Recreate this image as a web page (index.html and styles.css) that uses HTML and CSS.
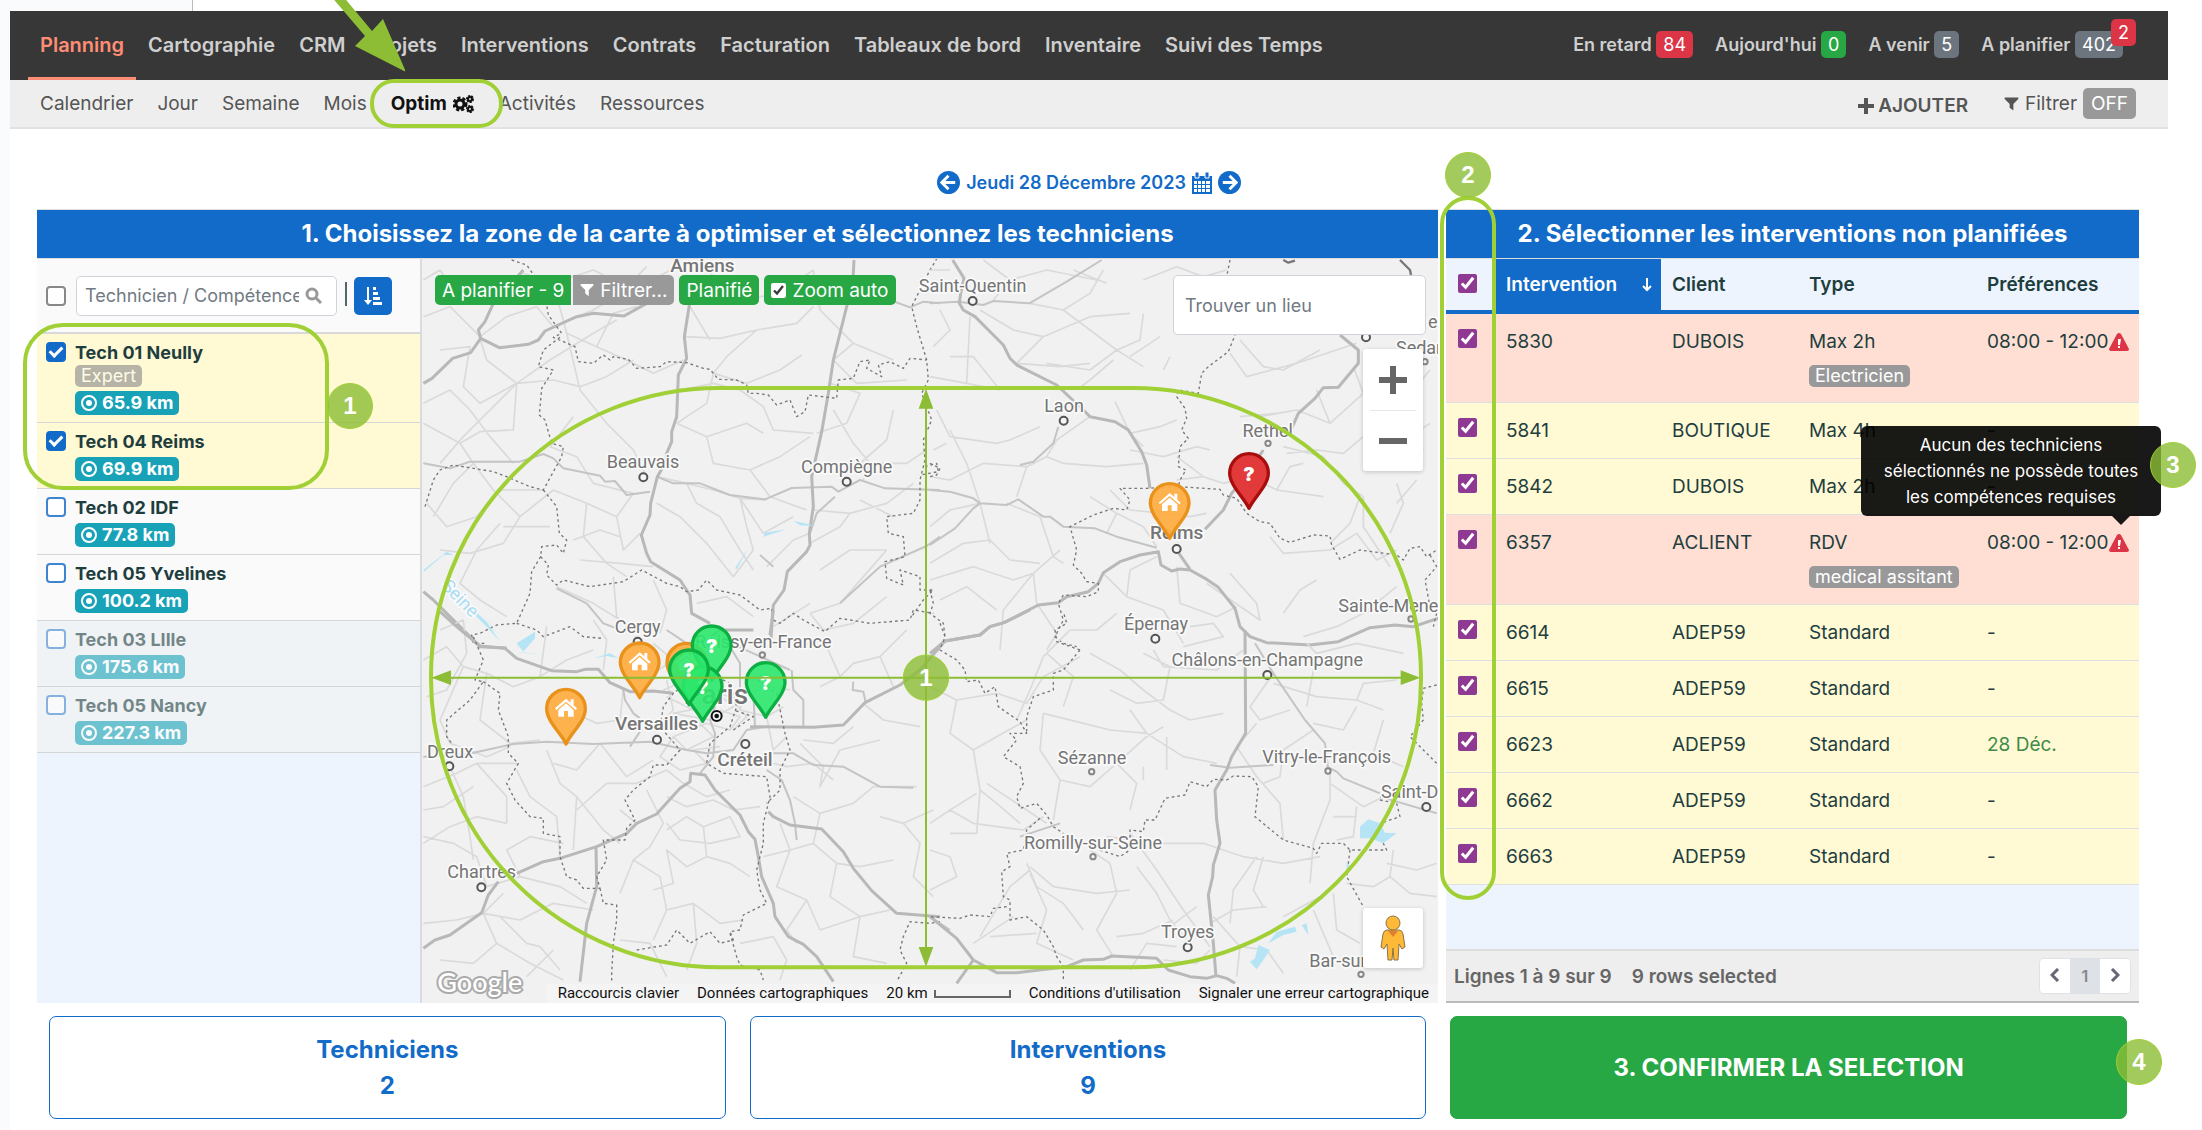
FILE: index.html
```html
<!DOCTYPE html>
<html lang="fr">
<head>
  <meta charset="UTF-8">
  <meta name="viewport" content="width=device-width, initial-scale=1.0">
  <title>Planning - Optim</title>
  <link rel="stylesheet" href="styles.css">
</head>
<body>
  <svg class="defs" width="0" height="0" aria-hidden="true">
    <symbol id="filter" viewBox="0 0 16 16"><path d="M1 1h14q1 1 0 2L10 8v7l-4-3V8L1 3Q0 2 1 1z"/></symbol>
    <symbol id="target" viewBox="0 0 16 16"><circle cx="8" cy="8" r="7" fill="none" stroke="currentColor" stroke-width="2"/><circle cx="8" cy="8" r="3"/></symbol>
    <symbol id="warning" viewBox="0 0 20 18"><path d="M10 0q1 0 2 1l8 15q0 2-2 2H2q-2 0-2-2L8 1q1-1 2-1z"/><path d="M9 6h3l-1 6H9zM9 13h2v2H9z" fill="#fff"/></symbol>
    <symbol id="house" viewBox="0 0 66 56" overflow="visible"><path d="M33 0 0 29l4 5L33 9l29 25 4-5-10-9V2h-9v10z"/><path d="M10 34 33 14l23 20v20H39V37H27v17H10z"/></symbol>
  </svg>

  <div class="page-top"></div>
  <div class="app">
    <header class="topbar">
      <nav class="main-nav">
        <a class="active" href="#">Planning</a>
        <a href="#">Cartographie</a>
        <a href="#">CRM</a>
        <a href="#">Projets</a>
        <a href="#">Interventions</a>
        <a href="#">Contrats</a>
        <a href="#">Facturation</a>
        <a href="#">Tableaux de bord</a>
        <a href="#">Inventaire</a>
        <a href="#">Suivi des Temps</a>
      </nav>
      <div class="counters">
        <a href="#">En retard <span class="count red">84</span></a>
        <a href="#">Aujourd'hui <span class="count green">0</span></a>
        <a href="#">A venir <span class="count">5</span></a>
        <a href="#">A planifier <span class="count">402<span class="count red alert">2</span></span></a>
      </div>
    </header>

    <div class="subbar">
      <nav class="sub-nav">
        <a href="#">Calendrier</a>
        <a href="#">Jour</a>
        <a href="#">Semaine</a>
        <a href="#">Mois</a>
        <a class="current" href="#">Optim
          <svg width="22" height="20" viewBox="0 0 22 20"><circle cx="7" cy="10" r="4" fill="none" stroke="#111" stroke-width="3"/><circle cx="7" cy="10" r="6" fill="none" stroke="#111" stroke-width="3" stroke-dasharray="3 2"/><g fill="none" stroke="#111"><circle cx="17" cy="5" r="2" stroke-width="2"/><circle cx="17" cy="5" r="3" stroke-width="2" stroke-dasharray="2 1"/><circle cx="17" cy="15" r="2" stroke-width="2"/><circle cx="17" cy="15" r="3" stroke-width="2" stroke-dasharray="2 1"/></g></svg>
          <svg class="arrow" width="80" height="76" viewBox="0 0 80 76"><path d="M5-3h12l30 36 11-12 23 53-51-26 10-10z"/></svg>
        </a>
        <a href="#">Activités</a>
        <a href="#">Ressources</a>
      </nav>
      <div class="actions">
        <button class="add"><svg width="16" height="16" viewBox="0 0 16 16"><path d="M6 0h4v6h6v4h-6v6H6v-6H0V6h6z"/></svg>AJOUTER</button>
        <button class="filter"><svg width="15" height="16"><use href="#filter"/></svg>Filtrer <span class="off">OFF</span></button>
      </div>
    </div>

    <div class="date">
      <button aria-label="Jour précédent"><svg width="23" height="23" viewBox="0 0 24 24"><circle cx="12" cy="12" r="12"/><path d="M12 5l-7 7 7 7M6 12h13" fill="none" stroke="#fff" stroke-width="3"/></svg></button>
      <span>Jeudi 28 Décembre 2023</span>
      <button aria-label="Calendrier"><svg width="20" height="22" viewBox="0 0 20 22"><path d="M0 4h20v18H0z"/><path d="M2 9h3v3H2zM6 9h3v3H6zM10 9h3v3h-3zM14 9h4v3h-4zM2 13h3v3H2zM6 13h3v3H6zM10 13h3v3h-3zM14 13h4v3h-4zM2 17h3v3H2zM6 17h3v3H6zM10 17h3v3h-3zM14 17h4v3h-4z" fill="#fff"/><path d="M3 0h4v6H3zM13 0h4v6h-4z" stroke="#fff"/></svg></button>
      <button aria-label="Jour suivant"><svg width="23" height="23" viewBox="0 0 24 24"><circle cx="12" cy="12" r="12"/><path d="M12 5l7 7-7 7M18 12H5" fill="none" stroke="#fff" stroke-width="3"/></svg></button>
    </div>

    <main class="panels">
      <section class="panel">
        <h2>1. Choisissez la zone de la carte à optimiser et sélectionnez les techniciens</h2>
        <div class="zone">
          <div class="techs">
            <div class="tech-search">
              <input type="checkbox" class="check all" aria-label="Tous les techniciens">
              <div class="search">
                <input type="text" aria-label="Technicien / Compétence" placeholder="Technicien / Compétence">
                <svg width="17" height="17" viewBox="0 0 17 17"><path d="M11 11l5 5M12 7A5 5 0 1 1 2 7a5 5 0 0 1 10 0z"/></svg>
              </div>
              <span class="bar"></span>
              <button class="sort" aria-label="Trier"><svg width="18" height="20" viewBox="0 0 18 20"><path d="M3 1h2v13h3l-4 5-4-5h3zM9 1h3v3H9zM9 6h5v3H9zM9 11h7v3H9zM9 16h9v3H9z"/></svg></button>
            </div>
            <div class="tech-list">
              <div class="tech selected">
                <input type="checkbox" class="check" id="t1" checked>
                <div><label for="t1">Tech 01 Neully</label><div class="skill">Expert</div><div class="km"><svg width="16" height="16"><use href="#target"/></svg>65.9 km</div></div>
              </div>
              <div class="tech selected">
                <input type="checkbox" class="check" id="t2" checked>
                <div><label for="t2">Tech 04 Reims</label><div class="km"><svg width="16" height="16"><use href="#target"/></svg>69.9 km</div></div>
              </div>
              <div class="tech">
                <input type="checkbox" class="check" id="t3">
                <div><label for="t3">Tech 02 IDF</label><div class="km"><svg width="16" height="16"><use href="#target"/></svg>77.8 km</div></div>
              </div>
              <div class="tech">
                <input type="checkbox" class="check" id="t4">
                <div><label for="t4">Tech 05 Yvelines</label><div class="km"><svg width="16" height="16"><use href="#target"/></svg>100.2 km</div></div>
              </div>
              <div class="tech far">
                <input type="checkbox" class="check" id="t5">
                <div><label for="t5">Tech 03 LIlle</label><div class="km"><svg width="16" height="16"><use href="#target"/></svg>175.6 km</div></div>
              </div>
              <div class="tech far">
                <input type="checkbox" class="check" id="t6">
                <div><label for="t6">Tech 05 Nancy</label><div class="km"><svg width="16" height="16"><use href="#target"/></svg>227.3 km</div></div>
              </div>
              <div class="outline techs-outline"><span class="step">1</span></div>
            </div>
          </div>

          <div class="map">
            <svg class="map-svg" viewBox="6 27 3048 2232" preserveAspectRatio="xMidYMid slice">
              <!-- north west -->
              <g class="minor">
                <path d="M10 90 60 60 110 130 200 120 310 70 400 100 520 60 640 120 770 50M10 200 90 170 180 260 260 200 350 170 400 230 520 180 600 130 680 50M60 300 150 290 130 410 180 460 290 400 400 390 480 410 560 380 640 330M290 400 200 330 180 265M290 400 280 540 180 545 120 580 10 520M290 400 210 480 130 560 60 640M290 400 390 330 520 250 590 210M10 460 90 420 150 480 210 560 280 640M440 250 480 420 560 520 640 600 680 680M460 500 390 590 470 620 520 700 640 730M400 100 440 250 530 290 620 330 700 370 790 330M530 290 580 190 650 170M795 260 900 265 1010 240 1130 220 1180 170M1010 240 920 320 880 370 980 400 1080 360 1145 315M810 170 870 270M860 60 960 150 1080 130 1180 60M1180 60 1200 180 1300 280 1420 330M1300 280 1240 330 1310 400 1460 390M780 420 880 400 960 420 1030 470 1060 540 1180 550M880 370 860 460 770 520M770 520 860 560 980 520 1030 550M860 560 880 640 990 660 1080 620 1170 560M990 660 1050 740 1160 780M710 680 800 700 880 720 960 745 1040 750M800 700 830 760 900 800 960 900 1000 960M960 745 980 830 1000 900 940 980 860 880 780 800 710 760M960 745 1030 850 1120 800M1180 780 1290 790 1400 760M1170 880 1260 830 1290 790M1040 950 1120 870 1170 850M640 730 590 800 500 760 400 720M500 760 490 860 560 940 620 980M590 800 610 900 660 850M400 720 300 800 250 880 150 910 60 900M250 830 390 830M370 720 240 720 170 800 80 830 20 760M300 800 220 720 160 640M240 820 170 900 120 1000 180 1050 260 1100M120 580 160 640 100 700 40 800M480 930 600 940 700 950M410 1010 520 1060 600 1110M580 980 590 1100 640 1150M700 990 740 1080 720 1150M830 1060 920 1040 1000 1100M1240 480 1300 580 1350 640 1330 690M1320 640 1400 570 1420 480M1320 640 1460 640 1520 600M1320 750 1420 800M1190 550 1280 520 1320 430 1230 400M1400 760 1480 700M1200 960 1290 900 1400 900M1170 1090 1260 1060 1400 900M1170 1090 1210 1140 1300 1120 1400 1040M1060 1130 1170 1060M460 870 540 840 600 860"/>
              </g>
              <g class="road">
                <path d="M10 640 90 655 150 635 300 635 370 612 400 625 430 655 540 677 555 695 585 693 620 735 690 725M710 680 760 700 840 700 930 735 1035 748 1115 714 1235 710 1255 725 1320 690 1395 715 1560 720M1245 740 1190 790 1170 850M1380 950 1520 888 1560 860M1260 1060 1380 950M410 1015 500 1060 550 1120 590 1135M1020 915 1060 950M1270 140 1410 150 1470 172 1510 155 1560 160"/>
              </g>
              <g class="motorway">
                <path d="M310 60 220 160 195 215 175 240 182 265 152 308 98 325 36 385 10 400M182 265 238 293 325 283 355 270 375 243 470 200 520 190 612 198 680 160M808 165 793 260 800 325 775 375 770 500 755 545 755 575 740 610 738 635 712 680 692 760 690 795 664 855 680 910 692 935 780 990 810 1035 815 1090 870 1120M1302 30 1298 110 1280 170 1240 330 1225 430 1205 545 1175 680 1180 770 1168 850 1170 885 1160 905 1102 965 1092 1020 1060 1065 1053 1165M10 1025 40 1050 80 1090 180 1190 260 1194"/>
              </g>
              <g class="border">
                <path d="M275 30 320 45 345 80 380 165 385 195 425 250 400 262 465 290 475 335 520 340 550 315 570 330 580 320 625 328 650 355 720 350 740 335 800 338 850 355 870 358 895 388 950 390 980 405 985 430 1010 430 1045 435 1070 465 1110 450 1130 500 1155 485 1165 435 1250 445 1255 390 1300 385 1320 335 1350 330 1340 355 1385 380 1375 345 1410 335 1450 355 1470 325 1520 330M420 262 370 300 355 350 400 360 365 415 358 495 375 510 395 580 430 590 425 620 370 720 330 710 260 680 220 665 100 645 60 660 40 690 15 770M370 720 410 770 418 850 440 870 430 910 410 885 365 890 362 920 335 965 330 1030 290 1120 230 1125 180 1150 155 1155 160 1180 200 1180M362 920 385 945 380 975 410 1005 430 990 510 1010 610 995 665 960 740 1000 780 1010 800 1025 835 1020 860 990 890 1020 960 1035 1020 1080 1055 1075 1060 1110 1080 1120 1120 1090 1150 1110 1215 1145 1260 1105 1350 1120 1470 1110 1480 1080 1540 1090M290 1120 350 1140 370 1160 450 1130 490 1160 545 1165M1560 10 1530 60 1500 120 1475 170 1490 230 1520 330 1525 390 1505 430 1535 510 1510 570 1515 630 1500 690 1500 750 1480 790 1400 800 1405 850 1450 860 1455 920 1395 935 1400 985 1450 1005 1440 960 1500 980 1500 1020 1540 1020 1510 1050 1475 1100M1515 650 1550 640 1555 665 1500 675"/>
              </g>
              <g class="water"><path d="M10 960 80 905 100 915 70 915 12 965zM70 1000 200 1115 240 1175 200 1130zM1120 812 1190 828 1140 826zM1030 860 1100 838 1035 848zM945 955 985 895 950 958zM290 1195 345 1145 345 1160z"/></g>
              <!-- north east -->
              <g transform="translate(1530 0)">
                <g class="minor">
                  <path d="M160 30 240 90 190 150M240 90 350 60 500 90M300 160 400 180 480 130 520 60M400 180 480 240 560 300 640 350M640 190 630 270 560 300 480 360 350 340M150 180 250 240 340 260 480 200 600 190M30 180 60 240 10 290M110 400 120 200M0 380 110 400 210 420 130 320 60 320M340 260 260 340 390 350 480 340M600 320 690 260M700 360 720 320M60 60 0 60M430 60 530 100M640 90 740 50 820 80 890 60M20 480 60 560 200 580 240 570 330 530M50 580 10 600M480 500 380 570 350 620 400 640 530 650 640 640M350 620 290 650 160 640 60 690 0 680M290 650 260 740M440 420 480 390 550 330M555 455 600 550 640 590M600 550 690 530 740 510M600 600 700 620 800 590 840 600M740 690 820 680 880 700 960 680M740 620 820 680M150 760 110 640 60 540M150 760 180 880M150 760 60 780 0 830M230 760 330 800 370 920 400 940M480 740 560 790 640 830 680 890M560 790 530 850M540 720 600 780 700 790 780 800 830 790M330 940 240 930 180 870 100 880 0 940M0 990 130 950 250 990 310 970 390 900M310 970 320 1060 380 1150 350 1200M310 970 220 1080 210 1200M30 1050 110 1010 200 1080M520 970 590 1040 700 1080 760 1180M590 1040 600 960 680 920M740 950 750 1060 860 1100 920 1070M830 1000 990 1110 980 1060 900 970M1020 860 1060 910 1200 900 1280 850 1340 930 1400 900M990 500 1100 480 1200 520 1160 420M1100 480 1040 490 930 500M1200 520 1300 430 1270 350M1060 590 1180 620 1240 700 1300 740 1300 830 1380 950M1070 610 1160 600 1240 610 1300 560M1040 720 1180 740M960 680 1040 720 1080 650 1120 640M930 270 1000 350 1060 360 1170 300M900 310 950 380 1100 340 1280 280M1200 880 1260 820 1290 740M1400 760 1460 690M1380 850 1420 760 1400 700M1060 1090 1110 1020 1160 990M1120 1160 1220 1130 1300 1090 1380 1070M1300 1090 1400 1010M1480 600 1440 560 1500 520M1450 420 1500 360"/>
                </g>
                <g class="road">
                  <path d="M0 720 60 725 130 745 150 760 230 765 265 748 340 800 360 800 400 830 495 835 560 860 680 893M150 760 130 775 75 835 0 885M385 530 370 580 310 635 270 645M0 160 85 155 160 165 190 153 298 160 410 95 515 30M880 180 880 100"/>
                </g>
                <g class="motorway">
                  <path d="M68 30 102 85 92 130 88 160 100 180 135 200 220 285 240 325 262 346 380 405 460 480 480 500 555 515 595 540 635 605 650 645 660 715M1230 255 1285 300 1285 340 1225 412 1180 413 1155 445 1105 490 1085 535M1000 600 940 690 905 730 880 780 825 838M20 1200 45 1173 150 1155 180 1130 222 1118 325 1065 385 1058 410 1040 475 1025 505 1000 520 968 570 935 630 915 685 905 693 945 725 963 750 957 780 960 825 985 865 1012 915 1075 930 1130 960 1160 1010 1178 1140 1185 1225 1175 1320 1133 1395 1125 1450 1130 1530 1103M740 900 780 958"/>
                </g>
                <g class="border">
                  <path d="M900 30 890 80 915 255 895 305 835 350 815 370 805 430 745 420 740 440 765 475 770 505 755 540 775 565 750 590 745 650 768 660 750 690 745 710 870 718 880 735 920 745 950 790 990 815 1020 820 1050 865 1080 877 1150 855 1200 858 1205 885 1230 928 1290 900 1400 915 1420 930 1440 895 1470 890 1490 920 1520 900M1500 915 1520 950 1485 990 1500 1070M740 710 650 715 570 715 600 750 590 780 550 775 490 795 420 830 440 900 430 945 455 970 470 995 505 1000 505 1025 470 1040 400 1035 385 1060 400 1110 375 1160 400 1180 440 1190M0 640 30 655 20 675 0 680M0 1020 10 1060 0 1090 40 1120 45 1160"/>
                </g>
                <path class="frontier" d="M1060 30 1075 38 1095 32M1410 30 1440 60 1443 75"/>
              </g>
              <!-- south west -->
              <g transform="translate(0 1080)">
                <g class="minor">
                  <path d="M10 150 80 110 130 170 200 190 280 230 360 200M60 60 130 30 140 130 80 240 20 260M130 170 60 330 90 400M200 190 180 330 270 400 360 390M90 400 200 440 270 410M10 530 110 490 170 460 290 460M90 470 130 560 150 680 160 750M10 700 90 650 170 620 260 640M170 460 260 560 260 640M200 830 170 740 100 700 10 680M200 830 300 800 420 830 500 880M190 910 230 1000 330 1060 430 1110M190 910 300 930 400 880 520 900M230 1000 160 1060 60 1050M10 940 110 930 190 910 250 850M240 920 320 1000 360 1010 420 1080M300 800 260 720 330 680 430 700M420 740 410 620 330 560 290 480M470 560 460 720M470 600 560 520 650 520 740 480M380 420 420 520 470 560 550 660 600 700M540 400 470 480 400 460M540 400 620 500 700 450M600 600 650 640M610 240 600 330 530 340 420 290M360 200 440 150 520 120M360 200 380 50M520 30 560 90 550 180M700 100 760 150 700 190M740 210 760 300 720 340M730 240 800 210 860 290 760 310 870 330 940 290 880 240 820 300 740 260M830 330 880 380 800 420 760 380 860 340 930 360 960 320 900 300M790 250 850 240 930 260 980 320 940 360M760 380 720 440 780 480 860 460 820 420 900 410M740 480 790 520 860 560 930 540M740 560 800 590 880 570 940 600 1020 590M740 660 800 620 850 650 930 620 960 680 870 700 780 690 740 640M850 650 860 740 800 770 740 720 760 820 700 840M860 740 930 760 990 800M680 540 730 640 690 710 640 750 600 850M640 750 720 800 740 900 700 990M740 900 820 880 900 940 970 930M600 990 690 1000 740 1100M820 880 830 1000 800 1080M1020 450 1100 470 1180 460 1240 510M960 260 1040 230 1110 240M980 220 960 300 1040 320 1090 290M1040 320 1060 420 1100 380M1140 400 1210 470 1200 530 1260 420 1380 390M1150 390 1240 400 1300 350M1120 560 1200 610 1300 580 1360 530 1490 530M1200 610 1180 700 1250 760 1320 770 1420 750M1030 740 1110 720 1180 700M1080 640 1110 720 1070 830 1160 870 1200 960M1250 760 1230 860 1320 920 1410 900M1160 870 1100 960 1130 1000M1200 960 1320 920 1300 1040 1400 1060M1450 640 1500 700 1480 800 1540 860M1380 620 1450 640 1540 600M1200 230 1260 200 1220 110 1140 100M1330 280 1390 330 1500 350M1420 230 1380 140 1460 60M1260 200 1300 160 1380 140M960 1000 1060 980 1100 1050 1080 1110M320 1100 400 1020M160 530 70 590 10 600"/>
                </g>
                <g class="road">
                  <path d="M10 440 130 435 280 402 380 395 520 402 690 395 800 420 860 430 940 420 980 360 1040 350M1040 480 1085 510 1110 570 1125 640 1130 690M1115 180 1120 240 1150 270 1150 348M1060 430 1120 430 1180 465 1270 470 1380 530 1480 533M610 240 615 270 640 310 660 325M660 365 630 410M1300 215 1298 240 1330 245 1337 278M885 290 870 330 885 370 880 440 840 490M740 60 800 100 860 90 930 110 960 160 960 240M955 110 1110 180M1000 250 1005 350"/>
                </g>
                <g class="motorway">
                  <path d="M60 5 110 50 180 108 255 115 290 145 395 182 470 185 495 178 535 178 570 218 630 245 700 243 760 250M10 1015 45 990 90 975 185 908 205 855 235 815M290 790 370 755 420 745 530 710 620 670 650 640 710 612 780 535 810 515 812 490 855 495 885 540 960 615 985 665 1005 688 1015 740 1025 800 1060 880 1065 920 1105 980 1150 1003 1190 1040 1240 1115M528 710 530 830 500 940 480 1115M1045 605 1060 620 1110 645 1205 657 1270 725 1300 775 1355 842 1430 910 1560 920M860 90 900 60 1000 60M1060 0 1050 75M990 350 1180 352 1270 345 1335 278 1440 225 1500 180 1560 110"/>
                </g>
                <g class="border">
                  <path d="M160 80 190 150 165 210 190 215 150 270 80 330 80 380 95 400M190 215 240 250 235 300 265 380 265 430 295 460 260 520 285 570 330 620 370 625 370 670 420 680 420 740 440 800 470 810 490 835 540 835 530 800 560 750 550 690 615 690 620 655 645 630 615 570 640 540 690 500 700 465 740 465 780 420 720 350 730 290 760 250 800 220M540 835 550 880 590 885 590 930 580 1000 575 1090 575 1115M650 1020 740 1005 770 960 810 1000 870 965 900 1000 940 990 930 965 960 960 970 915 1040 880 1020 840 1010 780 1030 700 1030 640 1050 560 1040 500 910 490 860 460 870 400 930 350 950 290 930 220 870 190M930 970 950 1040 960 1065 1020 1080 1030 1110M1000 200 1070 250 1095 370 1110 420 1080 480 1080 540 1040 580M940 360 1000 320 940 300M1560 935 1530 940 1470 935 1450 980 1440 1020 1460 1060 1430 1115"/>
                </g>
                <g class="water"><path d="M140 0h30l10 25zM200 20l40 70-30-50zM290 100 345 65 345 85 310 125zM520 145 570 130 595 145 560 138zM285 125 370 133 320 130z"/></g>
              </g>
              <!-- south east -->
              <g transform="translate(1530 1080)">
                <g class="minor">
                  <path d="M0 230 80 270 200 250 290 280 340 200 450 140M80 270 60 370 130 420 150 540 140 670 60 670M130 420 200 380 290 330M0 640 60 600 140 550M60 600 130 640 280 660 340 620M340 310 330 420 390 510 370 630M340 310 440 335 540 360 650 370 600 300M390 510 480 530 560 460 650 380 700 350M560 460 620 520 600 600M650 370 760 440 860 460M710 380 710 480M540 240 620 280 700 270 720 170 640 130M480 130 570 180 640 240 720 300 780 330 880 310M340 140 420 60 500 60 560 10M340 140 300 240 260 330M350 130 430 200 400 290M670 120 700 170 860 180 940 120M780 50 850 40 880 80 760 110M1030 190 960 290 990 330 1080 300M1030 220 1160 260 1280 270 1360 300M1130 100 1160 130 1130 290M1160 130 1280 100 1420 130M1280 270 1300 220 1400 210M1280 290 1240 360 1150 340M1150 360 1060 420 1050 500 1000 520M980 340 920 410 980 500 1050 580 1060 690M1200 480 1200 570 1150 700 1140 820M1200 520 1300 590 1360 560M1210 620 1280 620M1280 590 1270 680 1220 690M1360 330 1330 430 1420 470M1390 720 1380 800 1330 830 1250 820M1380 800 1440 850 1520 860M1370 760 1460 780 1520 760M290 760 320 830 400 880 460 960M300 780 240 830 150 980M300 770 370 830 500 850 600 840M300 790 350 900 320 1000 430 1050M620 770 680 850 720 930 780 1000M600 670 680 780 760 900 840 1010M480 720 540 760 560 850 500 960 550 1040M530 680 700 700 820 700 940 740 1060 760 1170 740M980 740 910 840 900 940M1000 740 970 840 1000 890M720 950 800 890M730 930 640 970 560 980M850 920 930 1010 1010 1020M840 940 910 900 1010 890M930 1010 920 1100M1010 1020 1060 1090M1150 900 1210 1040M1060 920 1170 860M600 1080 650 1000 740 1010M130 1000 250 920M180 980 320 970M60 740 0 720M60 740 80 800 0 840M840 1020 800 1060 700 1050M1210 850 1220 960 1290 1000M150 540 200 580 270 640M170 520 290 600 350 640M640 470 640 510"/>
                </g>
                <g class="road">
                  <path d="M840 465 900 473 1030 465M975 100 1030 190 1125 330 1185 400 1195 480M1190 470 1220 485 1240 505 1350 550M1350 560 1400 575 1520 610M0 920 60 960M270 680 390 640"/>
                </g>
                <g class="motorway">
                  <path d="M0 130 45 93 150 75 180 50 222 38 300 0M945 60 947 370 905 440 890 480 855 540 860 630 870 700 850 765 848 800 835 855 850 1000 858 1100M0 920 80 985 130 1050 80 1120M130 1050 200 1088 260 1088 410 1070 460 1050 520 1048 545 1038 680 1045 715 1080 780 1100 830 1105 860 1097 890 1105 915 1120"/>
                </g>
                <g class="border">
                  <path d="M30 40 45 80 30 120 80 150 105 180 110 215 145 210 165 250 195 230 205 290 270 335 290 370 240 370 260 390 220 440 270 470 280 520 260 560 270 595 320 580 350 615 370 650 400 670M450 120 400 180 370 190 370 240 310 260 290 320 290 370M450 120 380 95 375 60 410 40 400 5M330 625 290 660 280 720 230 730 240 770 215 785 220 860 240 870 240 930 290 920 340 960 370 1010 380 1040 400 1070 400 1110M230 890 190 895 180 920 120 915 90 925 0 920M510 720 570 740 600 720 600 660 640 665 645 630 675 630 705 565 765 555 780 515 830 530 850 508 890 510 910 498 965 500 985 530 975 620 1060 690 1150 715 1160 730 1175 700 1240 700 1260 720 1370 720 1350 680M1260 720 1250 800 1300 890M1520 10 1510 50M1520 225 1480 235 1475 280 1480 330 1440 380 1520 460M1350 570 1400 580 1410 620 1350 640"/>
                </g>
                <g class="water"><path d="M1290 650 1315 628 1350 640 1365 668 1400 670 1360 700 1320 685 1290 685zM1015 1000 1040 965 1095 950 1100 965 1060 975zM985 1005 1020 1020 1000 1050 980 1078 960 1055 975 1045zM1115 945 1130 940 1135 975zM1250 755l10 15-10 15z"/></g>
              </g>

              <g class="places">
                <circle cx="670" cy="682" r="12"/><circle cx="1280" cy="695" r="12"/><circle cx="653" cy="1175" r="12"/><circle cx="1658" cy="153" r="12"/><circle cx="1931" cy="512" r="12"/><circle cx="2270" cy="897" r="12"/><circle cx="2838" cy="262" r="12"/><circle cx="2206" cy="1166" r="12"/><circle cx="2542" cy="1275" r="12"/><circle cx="3019" cy="1671" r="12"/><circle cx="2303" cy="2092" r="12"/><circle cx="711" cy="1469" r="12"/><circle cx="976" cy="1482" r="12"/><circle cx="88" cy="1549" r="12"/><circle cx="184" cy="1912" r="12"/>
                <g class="small"><circle cx="2544" cy="580" r="8"/><circle cx="3015" cy="335" r="8"/><circle cx="2973" cy="1107" r="8"/><circle cx="2015" cy="1565" r="8"/><circle cx="2724" cy="1563" r="8"/><circle cx="2019" cy="1820" r="8"/><circle cx="2823" cy="2173" r="8"/><circle cx="1027" cy="1215" r="8"/></g>
                <circle class="capital" cx="890" cy="1398" r="15"/><circle class="dot" cx="890" cy="1398" r="7"/>
              </g>
              <text class="river" transform="translate(62 1010) rotate(46)">Seine</text>
              <g class="labels">
                <text class="mid" x="847" y="65">Amiens</text><text x="669" y="655">Beauvais</text><text x="1280" y="670">Compiègne</text><text x="653" y="1150">Cergy</text><text x="1030" y="1193">Roissy-en-France</text><text x="1658" y="125">Saint-Quentin</text><text x="1932" y="485">Laon</text><text x="2543" y="560">Rethel</text><text class="mid" x="2270" y="867">Reims</text><text x="3038" y="235">e</text><text x="3003" y="313">Sedan</text><text x="2208" y="1140">Épernay</text><text x="2972" y="1086">Sainte-Menehould</text><text x="2542" y="1248">Châlons-en-Champagne</text><text x="2016" y="1542">Sézanne</text><text x="2720" y="1540">Vitry-le-François</text><text x="3019" y="1645">Saint-Dizier</text><text x="2019" y="1797">Romilly-sur-Seine</text><text x="2303" y="2065">Troyes</text><text x="2823" y="2150">Bar-sur-Aube</text><text class="paris" x="888" y="1362">Paris</text><text x="710" y="1440" class="mid">Versailles</text><text x="975" y="1548" class="mid">Créteil</text><text x="90" y="1523">Dreux</text><text x="185" y="1885">Chartres</text>
              </g>

              <g class="pin orange" transform="translate(799 1348)"><path d="M0-4C-14-36-58-72-58-110a58 58 0 0 1 116 0C58-72 14-36 0-4z"/><use href="#house" x="-33" y="-140" width="66" height="56"/></g>
              <g class="pin green" transform="translate(875 1296)"><path d="M0-4C-14-36-58-72-58-110a58 58 0 0 1 116 0C58-72 14-36 0-4z"/><text y="-86">?</text></g>
              <g class="pin green" transform="translate(848 1418)"><path d="M0-4C-14-36-58-72-58-110a58 58 0 0 1 116 0C58-72 14-36 0-4z"/><text y="-86">?</text></g>
              <g class="pin green" transform="translate(807 1368)"><path d="M0-4C-14-36-58-72-58-110a58 58 0 0 1 116 0C58-72 14-36 0-4z"/><text y="-86">?</text></g>
              <g class="pin green" transform="translate(1037 1406)"><path d="M0-4C-14-36-58-72-58-110a58 58 0 0 1 116 0C58-72 14-36 0-4z"/><text y="-86">?</text></g>
              <g class="pin orange" transform="translate(659 1347)"><path d="M0-4C-14-36-58-72-58-110a58 58 0 0 1 116 0C58-72 14-36 0-4z"/><use href="#house" x="-33" y="-140" width="66" height="56"/></g>
              <g class="pin orange" transform="translate(438 1486)"><path d="M0-4C-14-36-58-72-58-110a58 58 0 0 1 116 0C58-72 14-36 0-4z"/><use href="#house" x="-33" y="-140" width="66" height="56"/></g>
              <g class="pin orange" transform="translate(2249 869)"><path d="M0-4C-14-36-58-72-58-110a58 58 0 0 1 116 0C58-72 14-36 0-4z"/><use href="#house" x="-33" y="-140" width="66" height="56"/></g>
              <g class="pin red" transform="translate(2487 779)"><path d="M0-4C-14-36-58-72-58-110a58 58 0 0 1 116 0C58-72 14-36 0-4z"/><text y="-86">?</text></g>

              <rect class="area" x="33" y="414" width="2970" height="1738" rx="865"/>
              <g class="arrows">
                <path d="M80 1283H2950M1518 470V2100"/>
                <path class="heads" d="M34 1283 93 1261V1305zM3001 1283 2942 1261V1305zM1518 416 1496 476H1540zM1518 2150 1496 2091H1540z"/>
              </g>
              <circle class="area-step" cx="1518" cy="1283" r="68"/>
              <text class="area-number" x="1518" y="1309">1</text>
              <text class="google" x="52" y="2225">Google</text>
            </svg>

            <div class="map-tags">
              <div class="tag-group"><button class="tag">A planifier - 9</button><button class="tag grey"><svg width="14" height="14"><use href="#filter"/></svg>Filtrer...</button></div>
              <button class="tag">Planifié</button>
              <label class="tag"><input type="checkbox" checked>Zoom auto</label>
            </div>
            <div class="map-tools">
              <input type="text" class="place" aria-label="Trouver un lieu" placeholder="Trouver un lieu">
              <div class="zoom">
                <button aria-label="Zoom avant"><svg width="28" height="28" viewBox="0 0 28 28"><path d="M11 0h6v11h11v6H17v11h-6V17H0v-6h11z"/></svg></button>
                <button aria-label="Zoom arrière"><svg width="28" height="28" viewBox="0 0 28 28"><path d="M0 11h28v6H0z"/></svg></button>
              </div>
            </div>
            <button class="pegman" aria-label="Street View"><svg width="26" height="46" viewBox="0 0 26 46"><path d="M7 15h12q3 0 4 4l2 13-3 2-3-5-1 16h-4l-1-12-1 12H8L7 29l-3 5-3-2 2-13q1-4 4-4z" fill="#fdb937" stroke="#8a7344"/><path d="M8 16h10l-5 6z" fill="#e37d2f"/><circle cx="13" cy="8" r="7" fill="#fdb937" stroke="#8a7344"/></svg></button>
            <div class="credits">
              <a href="#">Raccourcis clavier</a>
              <span>Données cartographiques</span>
              <span class="scale">20 km <i></i></span>
              <a href="#">Conditions d'utilisation</a>
              <a href="#">Signaler une erreur cartographique</a>
            </div>
          </div>
        </div>
      </section>

      <section class="panel jobs">
        <h2>2. Sélectionner les interventions non planifiées</h2>
        <table>
          <colgroup><col class="c-check"><col class="c-id"><col class="c-client"><col class="c-type"><col></colgroup>
          <thead>
            <tr><th><input type="checkbox" aria-label="Tout" checked></th><th class="sorted"><div>Intervention<svg width="12" height="14" viewBox="0 0 12 14"><path d="M6 0v12M2 8l4 4 4-4" fill="none" stroke="#fff" stroke-width="2"/></svg></div></th><th>Client</th><th>Type</th><th>Préférences</th></tr>
          </thead>
          <tbody>
            <tr class="bad"><td><input type="checkbox" aria-label="5830" checked></td><td>5830</td><td>DUBOIS</td><td>Max 2h<div class="skill">Electricien</div></td><td class="pref">08:00 - 12:00<svg class="warn" width="20" height="18"><use href="#warning"/></svg></td></tr>
            <tr><td><input type="checkbox" aria-label="5841" checked></td><td>5841</td><td>BOUTIQUE</td><td>Max 4h</td><td>-</td></tr>
            <tr><td><input type="checkbox" aria-label="5842" checked></td><td>5842</td><td>DUBOIS</td><td>Max 2h</td><td>-</td></tr>
            <tr class="bad"><td><input type="checkbox" aria-label="6357" checked></td><td>6357</td><td>ACLIENT</td><td>RDV<div class="skill">medical assitant</div></td><td class="pref">08:00 - 12:00<svg class="warn" width="20" height="18"><use href="#warning"/></svg><div class="tooltip" role="tooltip">Aucun des techniciens sélectionnés ne possède toutes les compétences requises<span class="step">3</span></div></td></tr>
            <tr><td><input type="checkbox" aria-label="6614" checked></td><td>6614</td><td>ADEP59</td><td>Standard</td><td>-</td></tr>
            <tr><td><input type="checkbox" aria-label="6615" checked></td><td>6615</td><td>ADEP59</td><td>Standard</td><td>-</td></tr>
            <tr><td><input type="checkbox" aria-label="6623" checked></td><td>6623</td><td>ADEP59</td><td>Standard</td><td class="day">28 Déc.</td></tr>
            <tr><td><input type="checkbox" aria-label="6662" checked></td><td>6662</td><td>ADEP59</td><td>Standard</td><td>-</td></tr>
            <tr><td><input type="checkbox" aria-label="6663" checked></td><td>6663</td><td>ADEP59</td><td>Standard</td><td>-</td></tr>
          </tbody>
        </table>
        <div class="table-foot">
          <span>Lignes 1 à 9 sur 9</span><span>9 rows selected</span>
          <div class="pager">
            <button aria-label="Précédent"><svg width="10" height="14" viewBox="0 0 10 14"><path d="M8 1 2 7l6 6"/></svg></button>
            <button class="on">1</button>
            <button aria-label="Suivant"><svg width="10" height="14" viewBox="0 0 10 14"><path d="M2 1l6 6-6 6"/></svg></button>
          </div>
        </div>
        <div class="outline rows-outline"><span class="step">2</span></div>
      </section>
    </main>

    <footer class="summary">
      <button>Techniciens<br>2</button>
      <button>Interventions<br>9</button>
      <button class="confirm">3. CONFIRMER LA SELECTION<span class="step">4</span></button>
    </footer>
  </div>
</body>
</html>
```
FILE: styles.css
```css
*,
*::after {
  box-sizing: border-box;
}

body {
  margin: 0;
  font-family: Inter, sans-serif;
  font-size: 18px;
  color: #1e3e3e;
  background: linear-gradient(90deg, #fafbfd 10px, #fff 10px);
  overflow-x: hidden;
}

a {
  color: inherit;
  text-decoration: none;
}

button {
  font: inherit;
  color: inherit;
  padding: 0;
  border: none;
  background: none;
  cursor: pointer;
}

svg {
  fill: currentColor;
  flex: none;
}

.defs {
  position: absolute;
}

.page-top {
  width: 193px;
  height: 11px;
  background: #fafbfd;
  border-right: 1px solid #bbb;
}

.app {
  margin: 0 34px 0 10px;
  padding-bottom: 11px;
  background: #fff;
}

/* top bar */
.topbar {
  display: flex;
  justify-content: space-between;
  height: 69px;
  padding: 0 45px 0 18px;
  background: #373737;
  color: #cfcfcf;
  font-weight: 600;
  font-size: 20px;
}

.main-nav {
  display: flex;
}

.main-nav a {
  padding: 0 12px;
  line-height: 68px;
  white-space: nowrap;
}

.main-nav .active {
  color: #ff8d75;
  border-bottom: 3px solid #ff8d75;
}

.counters {
  display: flex;
  align-items: center;
  gap: 22px;
  font-size: 18px;
  padding-bottom: 2px;
  white-space: nowrap;
}

.count {
  position: relative;
  display: inline-block;
  padding: 0 7px;
  line-height: 27px;
  border-radius: 5px;
  background: #6c757d;
  color: #fff;
  font-weight: 400;
}

.count.red {
  background: #dc3545;
}

.count.green {
  background: #28a745;
}

.count.alert {
  position: absolute;
  top: -12px;
  right: -13px;
}

.subbar {
  display: flex;
  justify-content: space-between;
  align-items: center;
  height: 49px;
  padding: 0 32px 0 30px;
  background: #eee;
  border-bottom: 2px solid #e2e2e2;
  color: #555;
  font-size: 19px;
}

.sub-nav {
  display: flex;
  gap: 24px;
}

.sub-nav .current {
  position: relative;
  display: flex;
  align-items: center;
  gap: 6px;
  color: #111;
  font-weight: 700;
}

.current::after {
  content: "";
  position: absolute;
  top: -13px;
  left: -21px;
  width: 133px;
  height: 49px;
  border: 4px solid #a0d035;
  border-radius: 24px;
}

.arrow {
  position: absolute;
  left: -66px;
  top: -94px;
  z-index: 2;
  fill: #8cbd35;
}

.actions,
.actions button {
  display: flex;
  align-items: center;
}

.actions {
  gap: 36px;
}

.actions .add {
  gap: 4px;
  padding-top: 4px;
  font-weight: 600;
}

.filter {
  gap: 6px;
}

.off {
  padding: 0 8px;
  line-height: 31px;
  background: #999;
  color: #fff;
  border-radius: 5px;
}

.date {
  display: flex;
  justify-content: center;
  align-items: center;
  gap: 6px;
  height: 80px;
  padding-top: 27px;
  color: #126bc8;
  font-weight: 600;
}

.date button {
  display: flex;
}

/* panels */
.panels {
  display: grid;
  grid-template-columns: 1401fr 693fr;
  gap: 8px;
  padding: 0 29px 0 27px;
}

.panel {
  position: relative;
  display: flex;
  flex-direction: column;
  min-width: 0;
}

.panel h2 {
  margin: 0;
  height: 50px;
  border-top: 1px solid #ddd;
  border-bottom: 1px solid #ddd;
  background: #126bc8;
  color: #fff;
  text-align: center;
  font-size: 24px;
  font-weight: 700;
  line-height: 48px;
}

.zone {
  display: flex;
  flex: 1;
  min-height: 744px;
}

.techs {
  width: 385px;
  background: #edf4fd;
  border-right: 2px solid #d8dcdf;
}

.tech-search {
  display: flex;
  align-items: center;
  height: 75px;
  padding: 0 28px 0 9px;
  background: #fafafa;
  border-bottom: 2px solid #d9d9d9;
}

.check {
  appearance: none;
  width: 20px;
  height: 20px;
  margin: 0;
  flex: none;
  border: 2px solid #3f84d0;
  border-radius: 4px;
  background: #fff;
}

.check.all {
  border-color: #888;
}

.check:checked {
  border-color: #126bc8;
  background: #126bc8;
}

.check:checked::after {
  content: "";
  display: block;
  width: 8px;
  height: 13px;
  margin: 0 0 0 4px;
  border: solid #fff;
  border-width: 0 3px 3px 0;
  transform: rotate(45deg);
}

.search {
  display: flex;
  align-items: center;
  width: 261px;
  height: 40px;
  margin-left: 10px;
  padding: 0 14px 0 8px;
  background: #fff;
  border: 1px solid #ced4da;
  border-radius: 5px;
}

.search input {
  flex: 1;
  min-width: 0;
  margin-right: 6px;
  padding: 0;
  border: none;
  font: inherit;
}

::placeholder {
  color: #717a82;
  opacity: 1;
}

.search svg {
  fill: none;
  stroke: #999;
  stroke-width: 3;
}

.bar {
  width: 2px;
  height: 24px;
  margin: 0 7px 4px 8px;
  background: #566;
}

.sort {
  display: grid;
  place-items: center;
  width: 40px;
  height: 38px;
  border-radius: 5px;
  background: #126bc8;
  color: #fff;
}

.tech-list {
  position: relative;
}

.tech {
  display: flex;
  gap: 9px;
  padding: 8px 9px 7px;
  border-bottom: 1px solid #d4d6d8;
  background: #fafafa;
  font-weight: 700;
  line-height: 22px;
}

.tech label {
  display: block;
}

.tech.selected {
  background: #fff9d4;
}

.tech.far {
  background: #f0f3f6;
}

.far > * {
  opacity: 0.6;
}

.skill {
  width: fit-content;
  padding: 0 6px;
  line-height: 22px;
  border-radius: 5px;
  background: #999;
  color: #fff;
  font-size: 18px;
  font-weight: 400;
}

.tech .skill {
  margin-top: 1px;
  background: #b6b4a6;
  color: #fffbe6;
}

.km {
  display: flex;
  align-items: center;
  gap: 5px;
  width: fit-content;
  margin-top: 4px;
  padding: 0 6px;
  line-height: 24px;
  border-radius: 5px;
  background: #17a2b8;
  color: #fff;
  font-weight: 700;
}

/* numbered steps */
.outline {
  position: absolute;
  border: 4px solid #a0d035;
  pointer-events: none;
}

.techs-outline {
  top: -11px;
  left: -14px;
  width: 306px;
  height: 167px;
  border-radius: 40px;
}

.rows-outline {
  top: -13px;
  left: -6px;
  width: 56px;
  height: 704px;
  border-radius: 28px;
}

.step {
  position: absolute;
  width: 46px;
  height: 46px;
  border: 1px solid #a0d035;
  border-radius: 50%;
  background: rgba(140, 189, 53, 0.8);
  color: #fff;
  font: bold 24px/44px "Liberation Sans", sans-serif;
  text-align: center;
}

.techs-outline .step {
  top: 56px;
  right: -48px;
}

.rows-outline .step {
  top: -48px;
  left: 1px;
}

/* map */
.map {
  position: relative;
  flex: 1;
  overflow: hidden;
  background: #f1f1f1;
}

.map-svg {
  position: absolute;
  inset: 0;
  width: 100%;
  height: 100%;
}

.minor,
.road,
.motorway,
.border,
.frontier {
  fill: none;
  stroke-linejoin: round;
}

.minor {
  stroke: #dadada;
  stroke-width: 5;
}

.road {
  stroke: #c4c4c4;
  stroke-width: 6;
}

.motorway {
  stroke: #b8b8b8;
  stroke-width: 9;
}

.border {
  stroke: #777;
  stroke-width: 4;
  stroke-dasharray: 8 9;
}

.frontier {
  stroke: #777;
  stroke-width: 7;
}

.water {
  fill: #b5e4f5;
}

.places {
  fill: #f5f5f5;
  stroke: #555;
  stroke-width: 6;
}

.small {
  stroke: #888;
}

.capital {
  stroke: #111;
}

.dot {
  fill: #111;
  stroke: none;
}

.labels,
.river {
  font-family: Roboto, sans-serif;
  font-size: 54px;
  fill: #757575;
  stroke: #fafafa;
  stroke-width: 10;
  stroke-linejoin: round;
  paint-order: stroke;
}

.labels {
  text-anchor: middle;
}

.river {
  fill: #a8dcf2;
}

.labels .mid {
  font-size: 57px;
  font-weight: 500;
}

.labels .paris {
  font-size: 84px;
  font-weight: 500;
}

.pin {
  stroke-width: 10;
  stroke-linejoin: round;
}

.pin use,
.pin text {
  fill: #fff;
  stroke: none;
}

.pin text {
  font-size: 57px;
  font-weight: 900;
  text-anchor: middle;
}

.orange {
  fill: rgba(253, 174, 68, 0.95);
  stroke: #e8921c;
}

.pin.green {
  fill: rgba(42, 232, 108, 0.9);
  stroke: #0cb042;
}

.pin.red {
  fill: #e23a3a;
  stroke: #a90e0e;
}

.area {
  fill: none;
  stroke: #a0d035;
  stroke-width: 12;
}

.arrows {
  stroke: #8cbd35;
  stroke-width: 6;
}

.heads {
  fill: #8cbd35;
  stroke: none;
}

.area-step {
  fill: rgba(140, 189, 53, 0.8);
  stroke: #a0d035;
  stroke-width: 3;
}

.area-number {
  font: bold 72px "Liberation Sans", sans-serif;
  fill: #fff;
  text-anchor: middle;
}

.google {
  font: 500 81px Lato, sans-serif;
  fill: #fff;
  stroke: #aaa;
  stroke-width: 12;
  paint-order: stroke;
}

.map-tags {
  position: absolute;
  top: 16px;
  left: 13px;
  display: flex;
  gap: 5px;
}

.tag-group {
  display: flex;
  gap: 2px;
}

.tag {
  display: flex;
  align-items: center;
  gap: 6px;
  height: 30px;
  padding: 0 7px;
  border-radius: 5px;
  background: #28a745;
  color: #fff;
  font-size: 19px;
}

.tag-group .tag:first-child {
  border-radius: 5px 0 0 5px;
}

.tag-group .grey {
  background: #999;
  border-radius: 0 5px 5px 0;
}

.tag input {
  width: 15px;
  height: 15px;
  margin: 0;
  accent-color: #fff;
}

.map-tools {
  position: absolute;
  top: 16px;
  right: 12px;
}

.place {
  display: block;
  width: 253px;
  height: 60px;
  padding: 0 11px;
  border: 1px solid #ced4da;
  border-radius: 5px;
  font: inherit;
}

.zoom {
  width: 60px;
  margin: 14px 3px 0 auto;
  padding: 0 7px;
  background: #fff;
  border-radius: 3px;
  box-shadow: 0 1px 4px rgba(0, 0, 0, 0.2);
}

.zoom button {
  display: grid;
  place-items: center;
  width: 100%;
  height: 61px;
  color: #666;
}

.zoom button + button {
  border-top: 1px solid #e6e6e6;
}

.pegman {
  position: absolute;
  right: 15px;
  bottom: 35px;
  display: grid;
  place-items: center;
  width: 60px;
  height: 60px;
  background: #fff;
  border-radius: 3px;
  box-shadow: 0 1px 4px rgba(0, 0, 0, 0.2);
}

.credits {
  position: absolute;
  right: 0;
  bottom: 0;
  display: flex;
  gap: 18px;
  padding: 0 9px 0 12px;
  background: rgba(245, 245, 245, 0.7);
  color: #111;
  font: 15px/19px Roboto, sans-serif;
}

.scale {
  display: flex;
  align-items: center;
  gap: 6px;
}

.scale i {
  width: 77px;
  height: 8px;
  border: 2px solid #666;
  border-top: none;
}

/* interventions */
.jobs {
  background: #edf4fd;
}

.jobs table {
  width: 100%;
  table-layout: fixed;
  border-collapse: collapse;
  font-size: 19px;
}

.c-check {
  width: 49px;
}

.c-id {
  width: 166px;
}

.c-client {
  width: 137px;
}

.c-type {
  width: 178px;
}

.jobs th {
  height: 53px;
  padding: 0 11px;
  border-bottom: 4px solid #126bc8;
  text-align: left;
  font-weight: 600;
}

.jobs .sorted {
  padding-right: 8px;
  background: #126bc8;
  color: #fff;
}

.sorted div {
  display: flex;
  justify-content: space-between;
  align-items: center;
}

.jobs td {
  height: 56px;
  padding: 17px 11px 11px;
  border-bottom: 1px solid #dddfe0;
  background: #fff9d4;
  line-height: 22px;
  vertical-align: top;
  white-space: nowrap;
}

.jobs .bad td {
  height: 90px;
  background: #ffdfd3;
}

.jobs td .skill {
  margin-top: 12px;
}

.jobs input {
  display: block;
  width: 19px;
  height: 19px;
  margin: -2px 0 0 1px;
  accent-color: #8f3a92;
}

.jobs .pref {
  position: relative;
}

.warn {
  color: #dc3545;
  vertical-align: -3px;
  margin-left: 1px;
}

.jobs .day {
  color: #3f8a4a;
}

.tooltip {
  position: absolute;
  right: -22px;
  bottom: 88px;
  z-index: 2;
  width: 300px;
  padding: 6px 16px;
  border-radius: 6px;
  background: rgba(0, 0, 0, 0.9);
  color: #fff;
  font-size: 17px;
  line-height: 26px;
  text-align: center;
  white-space: normal;
}

.tooltip::after {
  content: "";
  position: absolute;
  top: 100%;
  right: 31px;
  border: 9px solid transparent;
  border-top-color: rgba(0, 0, 0, 0.9);
  border-bottom: none;
}

.tooltip .step {
  top: 16px;
  right: -35px;
}

.table-foot {
  display: flex;
  align-items: center;
  gap: 20px;
  height: 54px;
  margin-top: auto;
  padding: 0 8px;
  background: #eee;
  border-top: 2px solid #ddd;
  border-bottom: 2px solid #bbb;
  color: #666;
  font-size: 19px;
  font-weight: 600;
}

.pager {
  display: flex;
  margin-left: auto;
  border: 1px solid #dee2e6;
  border-radius: 5px;
  overflow: hidden;
}

.pager button {
  width: 30px;
  height: 34px;
  background: #fff;
  font-size: 16px;
}

.pager .on {
  background: #dee2e6;
  color: #888;
}

.pager path {
  fill: none;
  stroke: #667;
  stroke-width: 3;
}

.summary {
  display: grid;
  grid-template-columns: repeat(3, 1fr);
  gap: 24px;
  padding: 13px 41px 0 39px;
}

.summary button {
  position: relative;
  height: 103px;
  border: 1px solid #126bc8;
  border-radius: 7px;
  color: #126bc8;
  font-size: 24px;
  font-weight: 700;
  line-height: 36px;
}

.summary .confirm {
  border-color: #28a745;
  background: #28a745;
  color: #fff;
}

.confirm .step {
  top: 22px;
  right: -36px;
}
```
